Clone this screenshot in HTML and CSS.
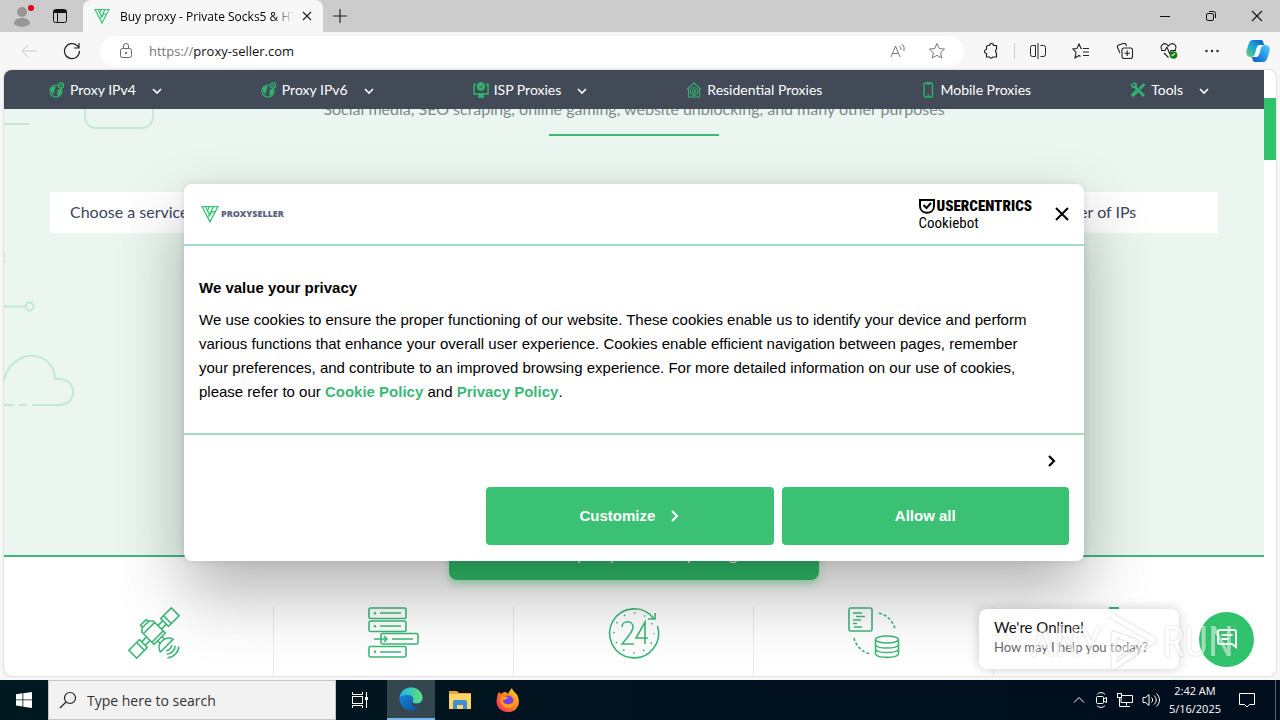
FILE: index.html
```html
<!DOCTYPE html>
<html lang="en">
<head>
    <meta charset="UTF-8">
    <meta name="viewport" content="width=device-width, initial-scale=1.0">
    <title>Buy proxy - Private Socks5 &amp; HTTPs</title>
    <link rel="stylesheet" href="styles.css">
</head>
<body>

<svg class="sprite" aria-hidden="true">
    <symbol id="logo" viewBox="0 0 16 16">
        <path d="M1 1.500h14L8 15z M4 1.500l4 8 M7.500 1.500L5.500 5.500 M11 1.500L6.500 10.500 M12.500 6h-3L8 9" fill="none" stroke="#3cc47c" stroke-width="1.200"/>
    </symbol>
    <symbol id="down" viewBox="0 0 10 10">
        <path d="M1 3l4 4 4-4" fill="none" stroke="currentColor" stroke-width="1.600"/>
    </symbol>
    <symbol id="right" viewBox="0 0 10 12">
        <path d="M2 1l5 5-5 5" fill="none" stroke="currentColor" stroke-width="2.200"/>
    </symbol>
    <symbol id="cross" viewBox="0 0 14 14">
        <path d="M1 1l12 12M13 1L1 13" fill="none" stroke="currentColor" stroke-width="2"/>
    </symbol>
    <symbol id="globe" viewBox="0 0 16 16">
        <circle cx="7" cy="9" r="6" fill="none" stroke="#2fb56f" stroke-width="1.200"/>
        <path d="M2 6l4-2 1 2-2 1.500 1 1.500-1.500 1L5 13 3 11 1.500 8z M8 8l4-1 .5 3-3 4-2-2 1.500-1.500z" fill="#2fb56f"/>
        <circle cx="12" cy="3.500" r="2.600" fill="#434a57" stroke="#2fb56f" stroke-width="1.300"/>
        <circle cx="12" cy="3.500" r="1" fill="#2fb56f"/>
    </symbol>
</svg>

<div class="browser">
    <header class="tabs">
        <button class="icon-btn profile" aria-label="Profile">
            <svg width="24" height="24" viewBox="0 0 24 24"><circle cx="12" cy="8" r="5" fill="#969696"/><path d="M4 20c-.5-8 16.500-8 16 0-5 3.500-11 3.500-16 0z" fill="#969696"/><circle cx="21" cy="4" r="3" fill="#e0001b"/></svg>
        </button>
        <button class="icon-btn workspaces" aria-label="Tab actions">
            <svg width="16" height="16" viewBox="0 0 16 16" fill="none" stroke="#111"><rect x="1.500" y="1.500" width="13" height="13" rx="2"/><path d="M2 3.500h12" stroke-width="3"/><path d="M5.500 5v9"/></svg>
        </button>
        <div class="tab">
            <svg width="16" height="16"><use href="#logo"/></svg>
            <span class="tab-title">Buy proxy - Private Socks5 &amp; HTTPs</span>
            <button class="icon-btn" aria-label="Close tab"><svg width="10" height="10" viewBox="0 0 10 10"><path d="M1 1l8 8M9 1L1 9" stroke="#222" stroke-width="1.200"/></svg></button>
        </div>
        <button class="icon-btn new-tab" aria-label="New tab"><svg width="14" height="14" viewBox="0 0 14 14"><path d="M7 0v14M0 7h14" stroke="#222" stroke-width="1.200"/></svg></button>
        <div class="window-btns">
            <button class="icon-btn" aria-label="Minimize"><svg width="12" height="12" viewBox="0 0 12 12"><path d="M1 6.500h10" stroke="#111"/></svg></button>
            <button class="icon-btn" aria-label="Restore"><svg width="12" height="12" viewBox="0 0 12 12" fill="none" stroke="#111"><rect x="1.500" y="3.500" width="7" height="7" rx="1.500"/><path d="M4 1.500h4.500a2 2 0 0 1 2 2V8"/></svg></button>
            <button class="icon-btn" aria-label="Close"><svg width="12" height="12" viewBox="0 0 12 12"><path d="M1 1l10 10M11 1L1 11" stroke="#111" stroke-width="1.100"/></svg></button>
        </div>
    </header>

    <div class="toolbar">
        <button class="icon-btn" aria-label="Back"><svg width="18" height="16" viewBox="0 0 18 16"><path d="M17 8H2M8 2L2 8l6 6" fill="none" stroke="#c9c9c9"/></svg></button>
        <button class="icon-btn" aria-label="Refresh"><svg width="18" height="18" viewBox="0 0 18 18"><path d="M16.500 9A7.500 7.500 0 1 1 14 3.500L16 5.500M16 1v5h-5" fill="none" stroke="#222" stroke-width="1.200"/></svg></button>
        <div class="address">
            <svg width="14" height="16" viewBox="0 0 14 16" fill="none" stroke="#666"><rect x="1.500" y="5.500" width="11" height="9" rx="2"/><path d="M4.500 5.500V3a2.500 2.500 0 0 1 5 0v2.500"/><circle cx="7" cy="10" r=".7" fill="#666"/></svg>
            <a class="url" href="#"><span>https://</span>proxy-seller.com</a>
            <button class="icon-btn" aria-label="Read aloud"><svg width="16" height="16" viewBox="0 0 16 16" fill="none" stroke="#777"><path d="M1 14L5.500 3 10 14M2.500 10.500h6M9.500 3a4 4 0 0 1 1.500 4M12 1a7 7 0 0 1 2 7"/></svg></button>
            <button class="icon-btn" aria-label="Add to favorites"><svg width="18" height="18" viewBox="0 0 18 18"><path d="M9 1.500l2.300 5 5.200.6-3.900 3.600 1.100 5.300L9 13.300 4.300 16l1.100-5.300L1.500 7.100l5.200-.6z" fill="none" stroke="#777"/></svg></button>
        </div>
        <div class="extras">
            <button class="icon-btn" aria-label="Extensions"><svg width="16" height="16" viewBox="0 0 16 16"><path d="M5 2.500h1.500a2 2 0 0 1 4 0H13.500V6.500a2 2 0 0 0 0 3.500V14h-3.500a2 2 0 0 1-3.500 0H3.500V10.500a2 2 0 1 1 0-4v-2.500a1.500 1.500 0 0 1 1.500-1.500z" fill="none" stroke="#222" stroke-width="1.200"/></svg></button>
            <span class="sep"></span>
            <button class="icon-btn" aria-label="Split screen"><svg width="16" height="16" viewBox="0 0 16 16" fill="none" stroke="#222"><path d="M5.500 2.500h-3a2 2 0 0 0-2 2v7a2 2 0 0 0 2 2h3zM10.500 2.500h3a2 2 0 0 1 2 2v7a2 2 0 0 1-2 2h-3M8 0v16"/></svg></button>
            <button class="icon-btn" aria-label="Favorites"><svg width="18" height="16" viewBox="0 0 18 16" fill="none" stroke="#222" stroke-width="1.100"><path d="M10 5.500H9L7 1 5 5.500l-4 .5 3 3.500L3 15l4-2.500 1.500 1M11 5.500h6M11 9h6M11 12.500h6"/></svg></button>
            <button class="icon-btn" aria-label="Collections"><svg width="18" height="16" viewBox="0 0 18 16" fill="none" stroke="#222" stroke-width="1.100"><path d="M4 10L1.500 4.500a2 2 0 0 1 1-2.500l5-1.500a2 2 0 0 1 2.500 1l.5 1.500"/><rect x="6" y="5" width="10.500" height="10.500" rx="2"/><path d="M11.200 7.500v5.500M8.500 10.200H14"/></svg></button>
            <button class="icon-btn" aria-label="Browser essentials"><svg width="18" height="18" viewBox="0 0 18 18" fill="none" stroke="#222" stroke-width="1.100"><path d="M2 8C-1 3 5-1 8.500 4 12-1 18 3 15 8M4 11l4.500 4.500M1 8.500h4l2-3.500 2.500 6.500 1.500-3h5"/><circle cx="13.500" cy="13" r="3.800" fill="#107c10" stroke="none"/><path d="M11.700 14l3.300-2.500" stroke="#fff"/></svg></button>
            <button class="icon-btn" aria-label="Settings"><svg width="16" height="16" viewBox="0 0 16 16" fill="#222"><circle cx="2.500" cy="8" r="1.200"/><circle cx="8" cy="8" r="1.200"/><circle cx="13.500" cy="8" r="1.200"/></svg></button>
            <button class="icon-btn" aria-label="Copilot">
                <svg width="24" height="24" viewBox="0 0 24 24">
                    <defs>
                        <linearGradient id="cpa" x1="0" y1="1" x2="1" y2="0"><stop offset="0" stop-color="#6bd36b"/><stop offset=".5" stop-color="#17a6d8"/><stop offset="1" stop-color="#0a50b8"/></linearGradient>
                        <linearGradient id="cpb" x1="0" y1="1" x2="1" y2="0"><stop offset="0" stop-color="#1352c4"/><stop offset=".5" stop-color="#2196e8"/><stop offset="1" stop-color="#5fd0f5"/></linearGradient>
                    </defs>
                    <path d="M7 1h8c3 0 2 5 4 5h-5c-2 0-3 2-4 5l-1 4c-1 2-2 3-4 3-4 0-6-3-4-8l2-6c1-2 2-3 4-3z" fill="url(#cpa)"/>
                    <path d="M17 23H9c-3 0-2-5-4-5h5c2 0 3-2 4-5l1-4c1-2 2-3 4-3 4 0 6 3 4 8l-2 6c-1 2-2 3-4 3z" fill="url(#cpb)"/>
                    <path d="M11 8c1-2 2-2 4-2-2 2-2 8-4 11 0 1-2 1-3 1 2-2 2-8 3-10z" fill="#f4f8fa"/>
                </svg>
            </button>
        </div>
    </div>

    <div class="viewport">
        <div class="page">
            <nav class="site-nav">
                <a href="#"><svg width="16" height="16"><use href="#globe"/></svg>Proxy IPv4<svg class="arrow" width="10" height="10"><use href="#down"/></svg></a>
                <a href="#"><svg width="16" height="16"><use href="#globe"/></svg>Proxy IPv6<svg class="arrow" width="10" height="10"><use href="#down"/></svg></a>
                <a href="#"><svg width="16" height="16" viewBox="0 0 16 16" fill="none" stroke="#2fb56f" stroke-width="1.500"><path d="M3 2.500H1v9.500h14V2.500h-2M5 15h6"/><path d="M6 12h4v3H6z" fill="#2fb56f"/><circle cx="8" cy="4.500" r="3.500" fill="#2fb56f"/><path d="M6.300 4.500l1.400 1.300 2.200-2.500" stroke="#434a57" stroke-width="1"/></svg>ISP Proxies<svg class="arrow" width="10" height="10"><use href="#down"/></svg></a>
                <a href="#"><svg width="16" height="16" viewBox="0 0 16 16" fill="none" stroke="#2fb56f" stroke-width="1.100"><path d="M1 7.500L8 1l7 6.500M2.500 7v8h11V7"/><circle cx="8" cy="9.500" r="3.700"/><circle cx="8" cy="9.500" r="1.500"/><path d="M8 11v3"/></svg>Residential Proxies</a>
                <a href="#"><svg width="14" height="16" viewBox="0 0 14 16" fill="none" stroke="#2fb56f" stroke-width="1.300"><rect x="3" y="1" width="8.500" height="14" rx="1.500"/><path d="M5.500 2.200h3.500M6.500 13h1.500"/></svg>Mobile Proxies</a>
                <a href="#"><svg width="16" height="16" viewBox="0 0 16 16" fill="none" stroke="#2fb56f"><path d="M5 5l9 9" stroke-width="2.500"/><path d="M1 2l2 3h3l0-3-3-1" stroke-width="1.800"/><path d="M14.500 2L9.500 7" stroke-width="2.500"/><path d="M7 9l-5 5" stroke-width="3.500"/></svg>Tools<svg class="arrow" width="10" height="10"><use href="#down"/></svg></a>
            </nav>

            <section class="hero">
                <svg class="clouds" width="180" height="310" viewBox="0 0 180 310" fill="none" stroke="#c3e8d6" stroke-width="2" aria-hidden="true">
                    <path d="M0 15h25M81 0v7c0 8 5 12 12 12h44c8 0 12-5 12-12V0"/>
                    <path d="M0 197.500h21"/><circle cx="25.500" cy="197.500" r="4"/>
                    <path d="M0 271C8 238 50 240 51 270c22-3 24 24 6 26H28M23 296h-8M10 296H0"/>
                    <path d="M0 145v3M0 150v3"/>
                </svg>
                <p class="lead">Social media, SEO scraping, online gaming, website unblocking, and many other purposes</p>
                <form class="order">
                    <select aria-label="Service"><option>Choose a service</option></select>
                    <select aria-label="Number of IPs"><option>Number of IPs</option></select>
                </form>
            </section>

            <section class="features">
                <button class="cta">Select proxy and start parsing</button>
                <ul>
                    <li>
                        <svg width="52" height="52" viewBox="0 0 52 52">
                            <g transform="translate(26 26) rotate(45)">
                                <rect x="-5.500" y="-30" width="11" height="15"/><path d="M-5.500-19h11M-2.500-15v7M2.500-15v7"/>
                                <rect x="-5.500" y="15" width="11" height="15"/><path d="M-5.500 19h11M-2.500 15v-7M2.500 15v-7"/>
                                <path d="M-9-8H8V8H-9L-12 5V-5zM-7-8V8M5-8V8M-12-4h-3v8h3M8-3h4M8 3h4"/>
                                <path d="M18-9C9-7 9 7 18 9zM21-4c2 2 2 6 0 8M24-6c3 3 3 9 0 12M27-8c4 4 4 12 0 16"/>
                            </g>
                        </svg>
                    </li>
                    <li>
                        <svg width="52" height="52" viewBox="0 0 52 52">
                            <rect x="1" y="1" width="37" height="10.500" rx="1.500"/><rect x="1" y="14" width="37" height="10.500" rx="1.500"/><rect x="13" y="26.500" width="37" height="10.500" rx="1.500"/><rect x="1" y="39.500" width="37" height="10.500" rx="1.500"/>
                            <path d="M12 6h21M12 19h21M24 32h21M12 45h21M6 32h13M16 29l3 3-3 3"/>
                            <g class="dot"><circle cx="7" cy="6.200" r="1.200"/><circle cx="7" cy="19.200" r="1.200"/><circle cx="7" cy="44.800" r="1.200"/></g>
                        </svg>
                    </li>
                    <li>
                        <svg width="52" height="52" viewBox="0 0 52 52">
                            <path d="M49.500 19A24.500 24.500 0 1 1 46 12M40 12h7V6"/>
                            <circle cx="26" cy="26" r="20" stroke-dasharray="1.500 8.970" stroke-dashoffset=".7"/>
                            <path d="M14 20c0-7 11-7 11 0 0 5-6 11-11 17h12M37 37V15L28 31h12"/>
                        </svg>
                    </li>
                    <li>
                        <svg width="52" height="52" viewBox="0 0 52 52">
                            <rect x="1" y="1" width="23" height="23" rx="1.500"/>
                            <path d="M5 6h9M8 9.500h9M5 13h8M5 16.500h4M6 20h8"/>
                            <path d="M31 6c8 2 14 8 16 16M6 31c2 8 8 14 16 16" stroke-dasharray="3 2"/>
                            <ellipse cx="39" cy="32.500" rx="11.500" ry="3.500"/><path d="M27.500 33v14c2 4.500 21 4.500 23 0V33M27.500 38c2 4 21 4 23 0M27.500 42.500c2 4 21 4 23 0"/>
                        </svg>
                    </li>
                    <li>
                        <svg width="52" height="52" viewBox="0 0 52 52"><path class="dot" d="M21 0h10v8H21z"/><rect x="8" y="9" width="36" height="40" rx="3"/></svg>
                    </li>
                </ul>
            </section>
        </div>
        <div class="scrollbar"><div class="thumb"></div></div>

        <div class="overlay">
            <div class="cookie" role="dialog" aria-labelledby="cookie-title">
                <div class="cookie-head">
                    <span class="brand"><svg width="18" height="18"><use href="#logo"/></svg>PROXYSELLER</span>
                    <span class="vendor">
                        <span class="vendor-name"><svg width="16" height="16" viewBox="0 0 16 16" fill="none" stroke="#000" stroke-width="2"><path d="M1 2h14v6c0 9-14 9-14 0z"/><path d="M4.500 7l3 3 4.500-5"/></svg>USERCENTRICS</span>
                        <span class="vendor-product">Cookiebot</span>
                    </span>
                    <button class="icon-btn" aria-label="Close banner"><svg width="14" height="14"><use href="#cross"/></svg></button>
                </div>
                <div class="cookie-body">
                    <h2 id="cookie-title">We value your privacy</h2>
                    <p>We use cookies to ensure the proper functioning of our website. These cookies enable us to identify your device and perform various functions that enhance your overall user experience. Cookies enable efficient navigation between pages, remember your preferences, and contribute to an improved browsing experience. For more detailed information on our use of cookies, please refer to our <a href="#">Cookie Policy</a> and <a href="#">Privacy Policy</a>.</p>
                </div>
                <div class="cookie-foot">
                    <button class="icon-btn details" aria-label="Show details"><svg width="10" height="12"><use href="#right"/></svg></button>
                    <div class="cookie-btns">
                        <button>Customize <svg width="10" height="12"><use href="#right"/></svg></button>
                        <button>Allow all</button>
                    </div>
                </div>
            </div>
        </div>

        <div class="chat">
            <div class="chat-text">
                <strong>We're Online!</strong>
                <span>How may I help you today?</span>
            </div>
            <button class="chat-btn" aria-label="Open chat">
                <svg width="24" height="24" viewBox="0 0 24 24" fill="none" stroke="#fff" stroke-width="2"><path d="M5 3h14a2 2 0 0 1 2 2v15l-4-3H5a2 2 0 0 1-2-2V5a2 2 0 0 1 2-2zM6.500 8h11M6.500 12h7"/></svg>
            </button>
        </div>
        <div class="watermark">
            <span>ANY</span>
            <svg width="56" height="62" viewBox="0 0 56 62"><path d="M6 5l44 25L10 57V24l22 8-22 14" fill="none" stroke="#ccc" stroke-width="7" stroke-linejoin="round"/><path d="M6 5l44 25L10 57V24l22 8-22 14" fill="none" stroke="#fff" stroke-width="5" stroke-linejoin="round"/></svg>
            <span>RUN</span>
        </div>
    </div>
</div>

<footer class="taskbar">
    <button class="task" aria-label="Start"><svg width="16" height="16" viewBox="0 0 16 16" fill="#fff"><path d="M0 2.200l6.500-.9v6.200H0zM7.300 1.200L16 0v7.500H7.300zM0 8.300h6.500v6.200L0 13.600zM7.300 8.300H16V16l-8.700-1.200z"/></svg></button>
    <label class="search">
        <svg width="18" height="18" viewBox="0 0 18 18" fill="none" stroke="#222" stroke-width="1.200"><circle cx="11" cy="7" r="5.500"/><path d="M7 11l-6 6"/></svg>
        <input type="text" placeholder="Type here to search" aria-label="Search">
    </label>
    <button class="task" aria-label="Task view"><svg width="16" height="16" viewBox="0 0 16 16" fill="none" stroke="#fff"><path d="M.5 0v2.500h10V0M.5 16v-2.500h10V16M14.500 0v16"/><rect x=".5" y="4.500" width="10" height="7"/><path d="M13 6.500h3" stroke-width="3"/></svg></button>
    <button class="task active" aria-label="Microsoft Edge">
        <svg width="24" height="24" viewBox="0 0 24 24">
            <defs>
                <linearGradient id="edge1" x1="0" y1="0" x2="1" y2="0"><stop offset="0" stop-color="#1db4e8"/><stop offset="1" stop-color="#5fe07a"/></linearGradient>
                <linearGradient id="edge2" x1="0" y1="0" x2="1" y2="1"><stop offset="0" stop-color="#1a8fe0"/><stop offset="1" stop-color="#0a4a9c"/></linearGradient>
            </defs>
            <circle cx="12" cy="12" r="11.500" fill="url(#edge2)"/>
            <path d="M.7 10C2 4 6 .5 12 .5c7 0 11.500 5 11.500 10 0 4-3 6-6 6-3.500 0-4.500-1.500-3.500-3 1-2-.5-5.500-5-5.500-4 0-7 1-8.300 2z" fill="url(#edge1)"/>
            <path d="M13 13c-1 3 4 5 9 3l1.500-1c-1 3-2 4-3 5-5 2-10-3-7.500-7z" fill="#34474f"/>
        </svg>
    </button>
    <button class="task" aria-label="File Explorer"><svg width="24" height="24" viewBox="0 0 24 24"><path d="M1 3h8l2 2h12v4H1z" fill="#e8a33a"/><path d="M1 6h22v15H1z" fill="#ffd566"/><path d="M5 21v-7a2 2 0 0 1 2-2h10a2 2 0 0 1 2 2v7h-4v-4H9v4z" fill="#3c8fd0"/></svg></button>
    <button class="task" aria-label="Firefox">
        <svg width="24" height="24" viewBox="0 0 24 24">
            <defs><linearGradient id="fox" x1="1" y1="0" x2="0" y2="1"><stop offset="0" stop-color="#ffe226"/><stop offset=".5" stop-color="#ff7a1c"/><stop offset="1" stop-color="#f5206c"/></linearGradient></defs>
            <path d="M3 4l2 2c2-2 4-2 5-2L12 6c1-2 2-4 4-6 0 3 5 5 6 9 3 8-2 15-10 15C4 24-1 18 1 10c0-2 1-5 2-6z" fill="url(#fox)"/>
            <circle cx="12" cy="13" r="5.500" fill="#7a3fe0"/>
            <path d="M5 9c3-2 6 0 8 1-3 0-3 2-6 2 0 3 3 5 6 4 3 0 5-2 5-4 2 6-3 8-6 8-6 0-9-6-7-11z" fill="#ff9a1f"/>
        </svg>
    </button>
    <div class="tray">
        <svg width="12" height="12" viewBox="0 0 12 12" fill="none" stroke="#fff"><path d="M1 8.500l5-5 5 5"/></svg>
        <svg width="14" height="16" viewBox="0 0 14 16" fill="none" stroke="#fff"><rect x="2.500" y="4.500" width="7" height="7" rx="1"/><path d="M9.500 7l3-1.500v5L9.500 9M3 2.500C5 0 9 0 11 2.500M3 13.500C5 16 9 16 11 13.500"/></svg>
        <svg width="16" height="16" viewBox="0 0 16 16" fill="none" stroke="#fff"><path d="M5 3.500h10.500v7H4V6M9.500 10.500v3M6 14.500h7M2.500 6v8.500h4"/><rect x=".5" y="1.500" width="4" height="4"/></svg>
        <svg width="18" height="16" viewBox="0 0 18 16" fill="none" stroke="#fff"><path d="M1 5.500h2.500L7 2.500v11l-3.500-3H1zM9.500 5.500c1.500 1.500 1.500 3.500 0 5M12 3.500c3 3 3 6 0 9M14.500 1.500c4 4 4 9 0 13"/></svg>
        <div class="clock"><span>2:42 AM</span><span>5/16/2025</span></div>
        <button class="icon-btn notes" aria-label="Notifications"><svg width="18" height="18" viewBox="0 0 18 18" fill="none" stroke="#fff"><path d="M1.500 2.500h15v11h-5L9 16l-2.500-2.500h-5z"/></svg></button>
    </div>
</footer>

</body>
</html>
```
FILE: styles.css
```css
* {
    box-sizing: border-box;
}
body {
    margin: 0;
    height: 100vh;
    display: flex;
    flex-direction: column;
    overflow: hidden;
    background-color: #f7f7f7;
    font-family: "Open Sans", "Noto Sans", sans-serif;
}
button {
    border: none;
    cursor: pointer;
    font-family: inherit;
}
a {
    text-decoration: none;
}
svg {
    flex-shrink: 0;
}
.sprite {
    position: absolute;
    width: 0;
    height: 0;
}
.icon-btn {
    display: flex;
    align-items: center;
    justify-content: center;
    padding: 0;
    background: none;
    color: inherit;
}

/* browser window */
.browser {
    flex: 1;
    min-height: 0;
    display: flex;
    flex-direction: column;
}
.tabs {
    display: flex;
    align-items: center;
    height: 32px;
    background-color: #cccccc;
}
.profile {
    margin-left: 10px;
}
.workspaces {
    margin: 0 15px 0 18px;
}
.tab {
    display: flex;
    align-items: center;
    align-self: stretch;
    width: 240px;
    padding: 0 11px;
    background-color: #f7f7f7;
    border-radius: 8px 8px 0 0;
    font-size: 12px;
}
.tab-title {
    flex: 1;
    margin: 0 8px 0 10px;
    overflow: hidden;
    white-space: nowrap;
    -webkit-mask-image: linear-gradient(to right, #000 88%, transparent);
    mask-image: linear-gradient(to right, #000 88%, transparent);
}
.new-tab {
    margin-left: 10px;
}
.window-btns {
    display: flex;
    gap: 34px;
    margin-left: auto;
    padding-right: 17px;
}
.toolbar {
    display: flex;
    align-items: center;
    gap: 25px;
    height: 38px;
    padding: 0 10px 0 20px;
}
.address {
    flex: 1;
    display: flex;
    align-items: center;
    gap: 22px;
    height: 30px;
    margin-left: -6px;
    padding: 0 18px 0 19px;
    background-color: #fff;
    border-radius: 15px;
    font-size: 13px;
}
.url {
    flex: 1;
    margin-left: -6px;
    color: #111;
}
.url span {
    color: #777;
}
.extras {
    display: flex;
    align-items: center;
    gap: 26px;
    margin-left: -6px;
}
.sep {
    width: 1px;
    height: 16px;
    margin: 0 -11px;
    background-color: #ccc;
}

/* proxy site */
.viewport {
    position: relative;
    flex: 1;
    min-height: 0;
    display: flex;
    margin: 0 4px 4px;
    overflow: hidden;
    background-color: #fff;
    border-radius: 8px;
    box-shadow: 0 0 2px #aaa;
    font-family: Lato, sans-serif;
}
.page {
    flex: 1;
    overflow: hidden;
}
.site-nav {
    position: relative;
    z-index: 1;
    display: flex;
    align-items: center;
    justify-content: space-between;
    height: 39px;
    padding: 0 55px 0 45px;
    background-color: #434a57;
}
.site-nav a {
    display: flex;
    align-items: center;
    gap: 5px;
    color: #fff;
    font-size: 14px;
}
.site-nav .arrow {
    margin: 2px 0 0 11px;
}
.hero {
    position: relative;
    display: flow-root;
    height: 448px;
    background-color: #eaf6ef;
    border-bottom: 2px solid #3fb77c;
}
.clouds {
    position: absolute;
    left: 0;
    top: 0;
}
.lead {
    margin: -12px 0 0;
    color: #7d8a8a;
    font-size: 16px;
    line-height: 24px;
    text-align: center;
}
.lead::after {
    content: "";
    display: block;
    width: 170px;
    height: 2px;
    margin: 13px auto 0;
    background-color: #3ab97a;
}
.order {
    display: flex;
    justify-content: space-between;
    margin: 56px 46px 0;
}
.order select {
    width: 202px;
    height: 41px;
    padding: 0 20px 2px;
    appearance: none;
    border: none;
    background-color: #fff;
    color: #3b4560;
    font-family: inherit;
    font-size: 16px;
}
.features {
    position: relative;
}
.cta {
    display: block;
    width: 370px;
    height: 46px;
    margin: -23px auto 0;
    padding: 0 0 8px;
    background-color: #31c26c;
    border-radius: 8px;
    box-shadow: 0 4px 8px rgba(49, 194, 108, 0.4);
    color: #fff;
    font-size: 16px;
}
.features ul {
    display: grid;
    grid-template-columns: repeat(5, 1fr);
    margin: 27px 30px 0;
    padding: 0;
    list-style: none;
}
.features li {
    height: 120px;
    text-align: center;
}
.features li:not(:last-child) {
    border-right: 1px solid #e0efeb;
}
.features li svg {
    fill: none;
    stroke: #3cb878;
    stroke-width: 1.6;
    overflow: visible;
}
.features .dot {
    fill: #3cb878;
    stroke: none;
}
.scrollbar {
    width: 12px;
    padding-top: 28px;
    background-color: #fff;
}
.thumb {
    height: 62px;
    background-color: #31c26c;
}

/* cookie banner */
.overlay {
    position: absolute;
    inset: 0 12px 2px 0;
    z-index: 2;
    display: grid;
    place-items: center;
}
.cookie {
    width: 900px;
    max-width: 95%;
    background-color: #fff;
    border-radius: 8px;
    box-shadow: 0 32px 68px rgba(0, 0, 0, 0.3), 0 0 8px rgba(0, 0, 0, 0.1);
    font-family: "Liberation Sans", Arial, sans-serif;
}
.cookie-head {
    display: flex;
    align-items: center;
    height: 62px;
    padding: 0 15px 0 17px;
    border-bottom: 2px solid #a3dbbf;
}
.brand {
    display: flex;
    align-items: center;
    gap: 2px;
    color: #59647c;
    font-family: "Noto Sans", sans-serif;
    font-size: 9px;
    font-weight: 900;
}
.vendor {
    display: flex;
    flex-direction: column;
    margin: 0 23px 0 auto;
    font-family: "Roboto Condensed", Roboto, sans-serif;
}
.vendor-name {
    display: flex;
    align-items: center;
    gap: 2px;
    font-size: 15px;
    font-weight: 900;
    line-height: 18px;
}
.vendor-product {
    font-size: 15px;
    line-height: 16px;
}
.cookie-body {
    padding: 30px 15px 29px;
    font-size: 15px;
    line-height: 24px;
}
.cookie-body h2 {
    margin: 0 0 8px;
    font-size: 15px;
    line-height: 24px;
}
.cookie-body p {
    max-width: 840px;
    margin: 0;
}
.cookie-body a {
    color: #3cb878;
    font-weight: bold;
}
.cookie-foot {
    padding: 16px 15px;
    border-top: 2px solid #a3dbbf;
}
.details {
    margin: 4px 12px 20px auto;
}
.cookie-btns {
    display: grid;
    grid-template-columns: 1fr 1fr;
    gap: 8px;
    width: 67%;
    margin-left: auto;
}
.cookie-btns button {
    display: flex;
    align-items: center;
    justify-content: center;
    gap: 15px;
    height: 58px;
    background-color: #3bc174;
    border-radius: 4px;
    color: #fff;
    font-size: 15px;
    font-weight: bold;
}

/* chat widget */
.chat {
    position: absolute;
    right: 22px;
    bottom: 7px;
    z-index: 3;
    display: flex;
    align-items: center;
    gap: 20px;
}
.chat-text {
    display: flex;
    flex-direction: column;
    width: 200px;
    height: 60px;
    padding: 8px 15px;
    background-color: #fff;
    border-radius: 8px;
    box-shadow: 0 0 12px rgba(0, 0, 0, 0.2);
    color: #666;
    font-size: 13px;
    line-height: 20px;
}
.chat-text strong {
    color: #111;
    font-size: 15px;
    font-weight: normal;
}
.chat-btn {
    display: grid;
    place-items: center;
    width: 55px;
    height: 55px;
    padding: 0;
    background-color: #31c26c;
    border-radius: 50%;
}
.watermark {
    position: absolute;
    right: 42px;
    bottom: 4px;
    z-index: 4;
    display: flex;
    align-items: center;
    gap: 2px;
    opacity: 0.5;
    color: #fff;
    font-family: "Roboto Condensed", Roboto, sans-serif;
    font-size: 42px;
    text-shadow: 0 0 2px #888;
    pointer-events: none;
}

/* taskbar */
.taskbar {
    display: flex;
    height: 40px;
    background: linear-gradient(to right, #00181f, #000d1d);
    color: #fff;
}
.task {
    display: flex;
    align-items: center;
    justify-content: center;
    width: 48px;
    padding: 0;
    background: none;
}
.task.active {
    margin: 0 1px 0 3px;
    background-color: #34474f;
    border-bottom: 2px solid #76b9ed;
}
.search {
    display: flex;
    align-items: center;
    gap: 10px;
    width: 288px;
    padding-left: 10px;
    background-color: #f2f2f2;
    border: 1px solid #c5c5c5;
}
.search input {
    flex: 1;
    min-width: 0;
    padding: 0;
    border: none;
    outline: none;
    background: none;
    font-family: inherit;
    font-size: 14px;
}
.search input::placeholder {
    color: #333;
}
.tray {
    display: flex;
    align-items: center;
    gap: 9px;
    margin: 0 4px 0 auto;
    padding-right: 19px;
    border-right: 1px solid #56616a;
}
.clock {
    display: flex;
    flex-direction: column;
    text-align: center;
    font-size: 11px;
    line-height: 18px;
}
.notes {
    margin-left: 8px;
}
```
